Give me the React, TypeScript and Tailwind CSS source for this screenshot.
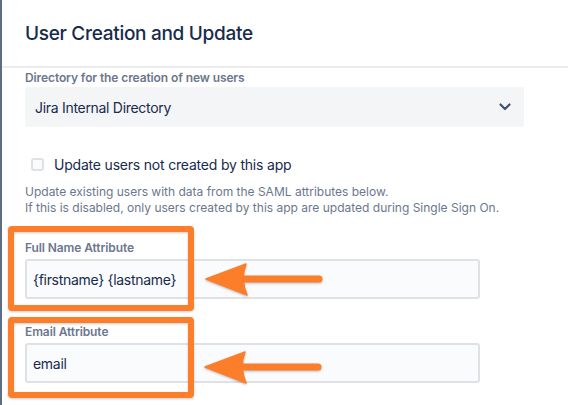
// App.tsx
// SSO settings panel: user creation / update, with two highlighted attribute fields

function ArrowLeft({ top, left }: { top: number; left: number }) {
  // tip of the arrow sits at (top, left); shaft runs to the right
  return (
    <svg
      width="124"
      height="40"
      viewBox="-4 -20 124 40"
      className="absolute drop-shadow-[0_1px_1px_rgba(0,0,0,0.25)]"
      style={{ top: top - 20, left: left - 4 }}
    >
      <path d="M0 0 L40 -15 Q34 0 41 16 Z" fill="#fd7e2a" stroke="#fd7e2a" strokeWidth="1.5" strokeLinejoin="round" />
      <line x1="32" y1="0" x2="113" y2="0" stroke="#fd7e2a" strokeWidth="7" strokeLinecap="round" />
    </svg>
  )
}

function Field({ label, value }: { label: string; value: string }) {
  return (
    <div>
      <p className="text-[12px] leading-4 font-semibold text-[#6b778c] tracking-[-0.1px]">{label}</p>
      <div className="mt-[3px] h-[40px] w-[455px] rounded-[3px] border-2 border-[#dfe1e6] bg-[#fafbfc] flex items-center px-[6px] text-[14px] tracking-[-0.3px] text-[#172b4d]">
        {value}
      </div>
    </div>
  )
}

export default function App() {
  return (
    <div className="relative w-[568px] h-[405px] overflow-hidden bg-white border-l-2 border-[#5e6c84] font-['Inter','Noto_Sans',sans-serif]">
      <div className="h-[66px] pt-[22px] pl-[23px]">
        <h1 className="text-[19px] leading-6 font-medium text-[#172b4d] tracking-[-0.3px]">User Creation and Update</h1>
      </div>
      <div className="h-[2px] bg-[#ebecf0]" />

      <div className="pl-[23px]">
        <p className="mt-[2px] text-[12px] leading-4 font-semibold text-[#6b778c] tracking-[-0.1px]">
          Directory for the creation of new users
        </p>
        <div className="mt-[1px] h-[40px] w-[499px] rounded-[3px] bg-[#f4f5f7] flex items-center justify-between pl-[10px] pr-[13px] text-[14px] tracking-[-0.3px] text-[#172b4d]">
          <span>Jira Internal Directory</span>
          <svg width="12" height="8" viewBox="0 0 12 8">
            <path d="M1.5 1.5 L6 6 L10.5 1.5" fill="none" stroke="#42526e" strokeWidth="2.2" strokeLinecap="round" strokeLinejoin="round" />
          </svg>
        </div>

        <label className="mt-[27px] h-[20px] flex items-center gap-[10px] pl-[6px] text-[14px] tracking-[-0.2px] text-[#172b4d]">
          <span className="w-[13px] h-[13px] rounded-[3px] border-2 border-[#dfe1e6] bg-[#fafbfc]" />
          Update users not created by this app
        </label>

        <div className="mt-[10px] text-[12px] leading-4 text-[#6b778c]">
          <p>Update existing users with data from the SAML attributes below.</p>
          <p>If this is disabled, only users created by this app are updated during Single Sign On.</p>
        </div>

        <div className="mt-[24px] flex flex-col gap-[25px]">
          <Field label="Full Name Attribute" value="{firstname} {lastname}" />
          <Field label="Email Attribute" value="email" />
        </div>
      </div>

      {/* annotation overlays */}
      <div className="absolute left-[6px] top-[226px] w-[186px] h-[85px] rounded-[4px] border-[6px] border-[#fd7e2a] drop-shadow-[0_1px_1px_rgba(0,0,0,0.2)]" />
      <div className="absolute left-[6px] top-[317px] w-[186px] h-[81px] rounded-[4px] border-[6px] border-[#fd7e2a] drop-shadow-[0_1px_1px_rgba(0,0,0,0.2)]" />
      <ArrowLeft top={279} left={204} />
      <ArrowLeft top={367} left={203} />
    </div>
  )
}
